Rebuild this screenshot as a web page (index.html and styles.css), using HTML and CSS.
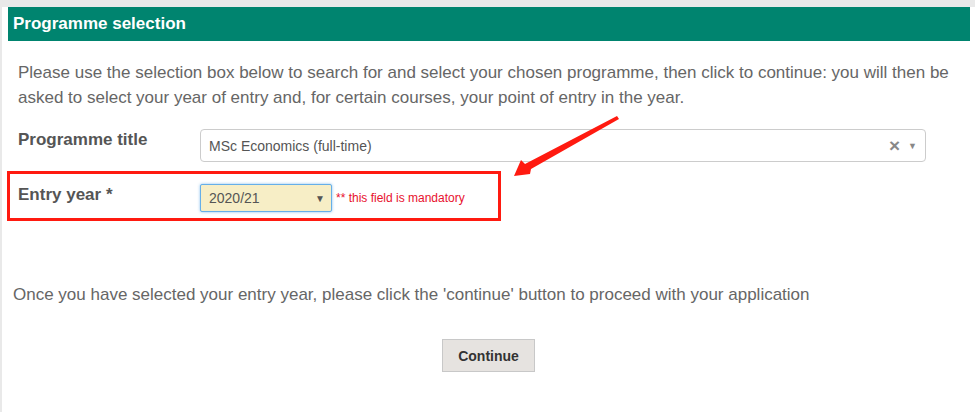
FILE: index.html
```html
<!DOCTYPE html>
<html>
<head>
    <title>Programme selection</title>
    <meta name="viewport" content="width=device-width, initial-scale=1.0">
    <link rel="stylesheet" href="styles.css">
</head>
<body>
    <div id="page">
        <div class="panel-heading">Programme selection</div>
        <p class="intro">Please use the selection box below to search for and select your chosen programme, then click to continue: you will then be asked to select your year of entry and, for certain courses, your point of entry in the year.</p>

        <div class="form-row">
            <label class="form-label">Programme title</label>
            <div class="combo">
                <span class="combo-text">MSc Economics (full-time)</span>
                <span class="combo-clear">&times;</span>
                <span class="combo-arrow">&#9660;</span>
            </div>
        </div>

        <div class="form-row entry-row">
            <label class="form-label">Entry year *</label>
            <div class="year-select">
                <span class="year-text">2020/21</span>
                <span class="year-arrow">&#9660;</span>
            </div>
            <span class="mandatory">** this field is mandatory</span>
        </div>

        <p class="note">Once you have selected your entry year, please click the 'continue' button to proceed with your application</p>

        <div class="actions">
            <button id="continue-button">Continue</button>
        </div>
    </div>

    <!-- screenshot annotation -->
    <div class="mark-box"></div>
    <svg class="mark-arrow" width="975" height="412" viewBox="0 0 975 412">
        <polygon points="617,116 619,119 531,169 530,174 514,176 521,160 525,164" fill="#ff1a10"/>
    </svg>
</body>
</html>
```

FILE: styles.css
```css
/* General styling */
body {
    margin: 0;
    background: #fff;
    font-family: "Liberation Sans", Arial, sans-serif;
    border-top: 7px solid #e9e9e9;
    border-left: 2px solid #e9e9e9;
    min-height: 405px;
    position: relative;
}
#page {
    padding: 0 5px 0 6px;
}
.panel-heading {
    background-color: #00846f;
    color: #fff;
    font-size: 17px;
    font-weight: bold;
    height: 34px;
    line-height: 34px;
    padding-left: 5px;
}
.intro {
    margin: 19px 0 0;
    padding-left: 10px;
    padding-right: 8px;
    font-size: 17px;
    line-height: 25px;
    color: #666;
}

/* Form rows */
.form-row {
    display: flex;
    align-items: flex-start;
    margin-top: 19px;
}
.entry-row {
    margin-top: 22px;
}
.form-label {
    width: 182px;
    flex-shrink: 0;
    padding-left: 10px;
    padding-top: 1px;
    font-size: 17px;
    font-weight: bold;
    color: #555;
}
.combo {
    display: flex;
    align-items: center;
    width: 726px;
    height: 33px;
    box-sizing: border-box;
    border: 1px solid #ccc;
    border-radius: 4px;
    padding: 0 8px;
    font-size: 14px;
    color: #555;
}
.combo-text {
    flex: 1;
}
.combo-clear {
    font-size: 19px;
    font-weight: bold;
    color: #888;
    margin-right: 8px;
}
.combo-arrow {
    font-size: 9px;
    color: #888;
}
.year-select {
    display: flex;
    align-items: center;
    width: 132px;
    height: 28px;
    box-sizing: border-box;
    border: 1px solid #66afe9;
    box-shadow: 0 0 3px rgba(102, 175, 233, 0.8);
    border-radius: 2px;
    background-color: #f7eec6;
    padding: 0 6px 0 8px;
    font-size: 14px;
    color: #555;
}
.year-text {
    flex: 1;
}
.year-arrow {
    font-size: 10px;
    color: #555;
}
.mandatory {
    margin-left: 4px;
    margin-top: 7px;
    font-size: 12px;
    color: #e8112d;
}
.note {
    margin: 70px 0 0;
    padding-left: 5px;
    font-size: 17px;
    line-height: 25px;
    color: #666;
}

/* Buttons */
.actions {
    display: flex;
    padding-left: 434px;
    margin-top: 32px;
}
button {
    width: 93px;
    height: 33px;
    background-color: #e6e3e0;
    border: 1px solid #c8c8c8;
    color: #333;
    font-family: "Liberation Sans", Arial, sans-serif;
    font-size: 14px;
    font-weight: bold;
    cursor: pointer;
}

/* Annotation overlay */
.mark-box {
    position: absolute;
    left: 5px;
    top: 164px;
    width: 488px;
    height: 44px;
    border: 3px solid #ff1a10;
}
.mark-arrow {
    position: absolute;
    left: -2px;
    top: -7px;
    pointer-events: none;
}
```
